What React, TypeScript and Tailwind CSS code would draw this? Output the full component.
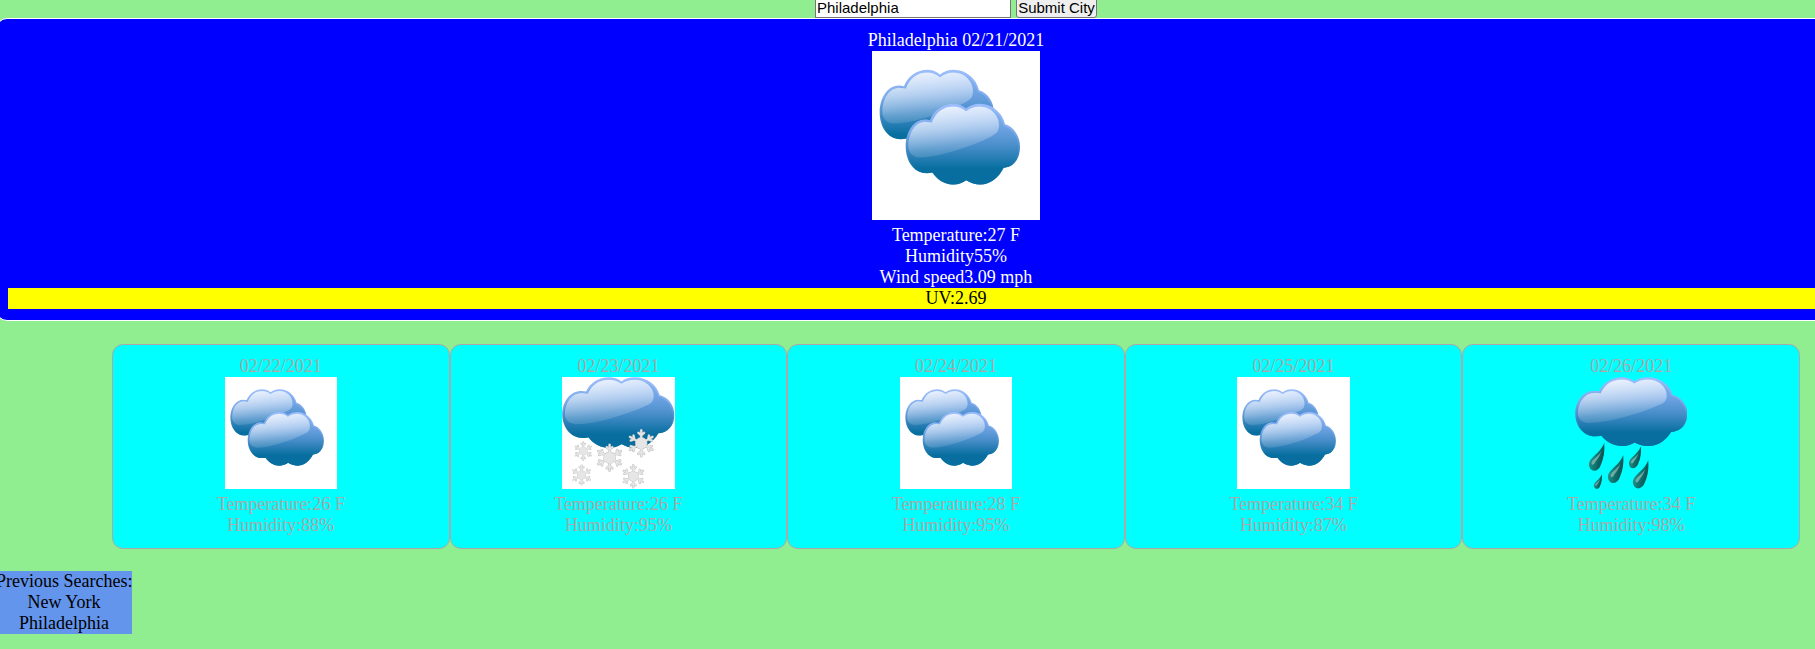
import { useId } from "react";

type Condition = "clouds" | "snow" | "rain";

const CLOUD =
  "M58 48 C64 48 68 49 73 50 C85 20 112 1 143 1 C158 1 170 6 181 15 C192 6 207 1 222 1 C260 1 290 28 298 62 C325 70 343 98 343 130 C343 165 325 192 295 192 C280 222 255 243 225 243 C208 243 195 238 182 230 C170 238 158 243 143 243 C118 243 95 230 79 206 C70 208 65 208 58 208 C25 208 0 172 0 128 C0 84 25 48 58 48Z";
const SHINE =
  "M8 128 C8 86 30 55 60 55 L78 57 C90 27 112 9 143 9 C158 9 170 14 181 23 C192 14 207 9 222 9 C256 9 280 36 280 64 C280 82 274 90 258 98 C225 116 190 128 150 141 C115 152 80 161 42 162 C20 160 8 146 8 128Z";

function Cloud({ id, transform }: { id: string; transform: string }) {
  return (
    <g transform={transform}>
      <path d={CLOUD} fill={`url(#${id}-edge)`} />
      <path d={CLOUD} fill={`url(#${id}-body)`} transform="translate(5 7) scale(.971)" />
      <path d={SHINE} fill={`url(#${id}-shine)`} />
    </g>
  );
}

function Flake({ x, y, r }: { x: number; y: number; r: number }) {
  return (
    <g transform={`translate(${x} ${y}) scale(${r / 40})`} strokeLinecap="round" fill="none">
      {["#c0c0c0", "#e6e6e6"].map((color, i) => (
        <g key={color} stroke={color} strokeWidth={i ? 4.5 : 7.5}>
          {[0, 60, 120, 180, 240, 300].map((a) => (
            <path key={a} transform={`rotate(${a})`} d="M0 0V-37M0 -23L-8 -30M0 -23L8 -30" />
          ))}
          <circle r="14" fill={color} />
        </g>
      ))}
    </g>
  );
}

function Drop({ id, x, y, s }: { id: string; x: number; y: number; s: number }) {
  return (
    <g transform={`translate(${x} ${y}) scale(${s})`}>
      <path d="M46 0 C48 24 45 46 36 66 C28 90 3 90 0 68 C-2 44 32 36 46 0Z" fill={`url(#${id}-drop)`} />
      <path d="M37 26 C28 42 10 50 8 61 C8 68 13 68 17 62 C23 52 32 44 37 26Z" fill="#c8dcd8" opacity=".5" />
    </g>
  );
}

function WeatherIcon({ kind, className }: { kind: Condition; className: string }) {
  const id = useId();
  return (
    <svg
      className={`block ${className} ${kind === "rain" ? "" : "bg-white"}`}
      viewBox={kind === "clouds" ? "0 0 504 504" : "0 0 336 336"}
      aria-hidden="true"
    >
      <defs>
        <linearGradient id={`${id}-edge`} x1="0" y1="0" x2="0" y2="1">
          <stop offset="0" stopColor="#9dbdfd" />
          <stop offset=".35" stopColor="#7eabec" />
          <stop offset=".6" stopColor="#4288c2" />
          <stop offset=".8" stopColor="#1275a6" />
          <stop offset="1" stopColor="#1b7ca8" />
        </linearGradient>
        <linearGradient id={`${id}-body`} x1="0" y1="0" x2="0" y2="1">
          <stop offset="0" stopColor="#8db6f6" />
          <stop offset=".3" stopColor="#6aa0e0" />
          <stop offset=".5" stopColor="#4a8fcb" />
          <stop offset=".8" stopColor="#076e9f" />
          <stop offset="1" stopColor="#076e9f" />
        </linearGradient>
        <linearGradient id={`${id}-shine`} x1=".3" y1="0" x2=".55" y2="1">
          <stop offset="0" stopColor="#fff" stopOpacity=".84" />
          <stop offset=".4" stopColor="#fff" stopOpacity=".52" />
          <stop offset=".75" stopColor="#fff" stopOpacity=".2" />
          <stop offset="1" stopColor="#fff" stopOpacity=".08" />
        </linearGradient>
        <linearGradient id={`${id}-drop`} x1="0" y1="0" x2="1" y2=".4">
          <stop offset="0" stopColor="#5a9c94" />
          <stop offset=".5" stopColor="#12807a" />
          <stop offset="1" stopColor="#0a4f50" />
        </linearGradient>
      </defs>
      {kind === "clouds" && (
        <>
          <Cloud id={id} transform="translate(23 54)" />
          <Cloud id={id} transform="translate(101 156)" />
        </>
      )}
      {kind === "snow" && (
        <>
          <Cloud id={id} transform="scale(.98 .875)" />
          <Flake x={63} y={222} r={29} />
          <Flake x={142} y={242} r={42} />
          <Flake x={237} y={199} r={42} />
          <Flake x={58} y={294} r={31} />
          <Flake x={213} y={298} r={36} />
        </>
      )}
      {kind === "rain" && (
        <>
          <Cloud id={id} transform="scale(.98 .853)" />
          <Drop id={id} x={41} y={197} s={1} />
          <Drop id={id} x={98} y={234} s={1} />
          <Drop id={id} x={161} y={208} s={0.78} />
          <Drop id={id} x={173} y={250} s={1} />
          <Drop id={id} x={56} y={292} s={0.52} />
        </>
      )}
    </svg>
  );
}

const forecast: { date: string; kind: Condition; temp: number; humidity: number }[] = [
  { date: "02/22/2021", kind: "clouds", temp: 26, humidity: 88 },
  { date: "02/23/2021", kind: "snow", temp: 26, humidity: 95 },
  { date: "02/24/2021", kind: "clouds", temp: 28, humidity: 95 },
  { date: "02/25/2021", kind: "clouds", temp: 34, humidity: 87 },
  { date: "02/26/2021", kind: "rain", temp: 34, humidity: 98 },
];

export default function App() {
  return (
    <div className="h-[649px] w-full overflow-hidden bg-[#90ee90] font-['Liberation_Serif',serif] text-[18px] leading-[21px] text-black">
      <div className="-ml-1 w-[1920px] text-center">
        <form
          className="flex h-[18px] items-end justify-center gap-[5px] font-['Liberation_Sans',sans-serif] text-[15px]"
          onSubmit={(e) => e.preventDefault()}
        >
          <input
            className="h-[22px] w-[196px] shrink-0 border border-[#767676] bg-white px-px outline-none"
            defaultValue="Philadelphia"
          />
          <button className="h-[22px] w-[81px] shrink-0 whitespace-nowrap rounded-[3px] border border-[#767676] bg-[#efefef] pt-px leading-[19px]">
            Submit City
          </button>
        </form>

        <section className="h-[303px] rounded-[11px] border border-white bg-[#0000ff] p-[11px] text-white">
          <div>Philadelphia 02/21/2021</div>
          <WeatherIcon kind="clouds" className="mx-auto mb-[5px] h-[169px] w-[168px]" />
          <div>Temperature:27 F</div>
          <div>Humidity55%</div>
          <div>Wind speed3.09 mph</div>
          <div className="bg-[#ffff00] text-black">UV:2.69</div>
        </section>

        <section className="mx-auto mt-[23px] grid w-[1688px] grid-cols-5 text-[#a9a9a9]">
          {forecast.map((day) => (
            <article key={day.date} className="h-[205px] rounded-[11px] border border-[#a9a9a9] bg-[#00ffff] p-[11px]">
              <div>{day.date}</div>
              <WeatherIcon kind={day.kind} className="mx-auto mb-[5px] h-[112px] w-[112.5px]" />
              <div>Temperature:{day.temp} F</div>
              <div>Humidity:{day.humidity}%</div>
            </article>
          ))}
        </section>

        <aside className="mt-[22px] w-[136px] whitespace-nowrap bg-[#6495ed]">
          <div>Previous Searches:</div>
          <div>New York</div>
          <div>Philadelphia</div>
        </aside>
      </div>
    </div>
  );
}
